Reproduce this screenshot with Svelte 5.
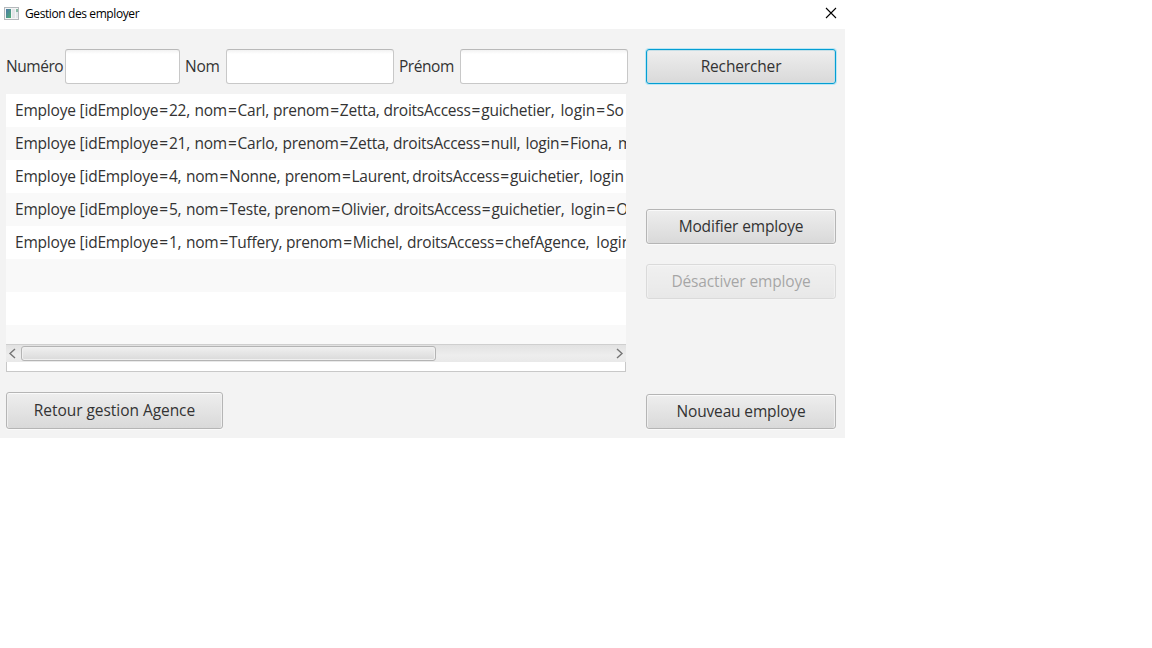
<script>
  const rows = [
    [['Employe [idEmploye=22, ', 179.5], ['nom=Carl, ', 78.5], ['prenom=Zetta, ', 110.5], ['droitsAccess=guichetier, ', 177], ['login=So', 66]],
    [['Employe [idEmploye=21, ', 179.5], ['nom=Carlo, ', 88], ['prenom=Zetta, ', 110.5], ['droitsAccess=null, ', 132.5], ['login=Fiona, ', 92.5], ['m', 8]],
    [['Employe [idEmploye=4, ', 171], ['nom=Nonne, ', 98.7], ['prenom=Laurent, ', 127.5], ['droitsAccess=guichetier, ', 177], ['login', 37]],
    [['Employe [idEmploye=5, ', 171], ['nom=Teste, ', 88.2], ['prenom=Olivier, ', 119.5], ['droitsAccess=guichetier, ', 177], ['login=O', 55]],
    [['Employe [idEmploye=1, ', 171], ['nom=Tuffery, ', 100], ['prenom=Michel, ', 121], ['droitsAccess=chefAgence, ', 189.3], ['login', 30]],
    [],
    [],
    []
  ];
</script>

<div class="window">
  <header>
    <svg class="app" width="15" height="13" viewBox="0 0 15 13">
      <defs>
        <linearGradient id="pane" x1="0" y1="0" x2="1" y2="1">
          <stop offset="0" stop-color="#4b78a8" />
          <stop offset="1" stop-color="#4fae74" />
        </linearGradient>
      </defs>
      <rect x=".5" y=".5" width="14" height="12" fill="#f5f5f5" stroke="#b4b8bb" />
      <rect x="2" y="2" width="5" height="9" fill="url(#pane)" />
      <rect x="8" y="2" width="3" height="9" fill="#e2e5e8" />
      <rect x="12" y="2" width="2" height="3" fill="#86b9a4" />
      <rect x="12" y="5" width="2" height="6" fill="#e3e9ec" />
    </svg>
    <span class="title">Gestion des employer</span>
    <svg class="close" width="12" height="12" viewBox="0 0 12 12">
      <path d="M1 1L11 11M11 1L1 11" stroke="#000" stroke-width="1.1" fill="none" />
    </svg>
  </header>
  <main>
    <section class="left">
      <div class="search">
        <label class="numero"><span>Numéro</span><input /></label>
        <label class="nom"><span>Nom</span><input /></label>
        <label class="prenom"><span>Prénom</span><input /></label>
      </div>
      <div class="list">
        <div class="rows">
          {#each rows as row}
            <div class="row">
              {#each row as [text, width]}
                {@const parts = text.split('=')}
                <span class="field" style="width: {width}px">{parts[0]}{#if parts.length > 1}<span class="eq">=</span>{parts[1]}{/if}</span>
              {/each}
            </div>
          {/each}
        </div>
        <div class="scroll">
          <svg width="15" height="17" viewBox="0 0 15 17"><path d="M9 4L4 8.500L9 13" /></svg>
          <div class="track"><div class="thumb"></div></div>
          <svg width="15" height="17" viewBox="0 0 15 17"><path d="M6 4L11 8.500L6 13" /></svg>
        </div>
        <div class="rest"></div>
      </div>
      <button class="back">Retour gestion Agence</button>
    </section>
    <section class="right">
      <button class="focused">Rechercher</button>
      <button class="edit">Modifier employe</button>
      <button class="disable" disabled>Désactiver employe</button>
      <button class="add">Nouveau employe</button>
    </section>
  </main>
</div>

<style>
  :global(body) { background: #fff; }
  .window {
    width: 845px;
    height: 438px;
    font: 15.5px/20px "Open Sans", "Noto Sans", sans-serif;
    letter-spacing: -0.2px;
    color: #333;
    background: #f3f3f3;
    overflow: hidden;
    white-space: nowrap;
  }
  header {
    display: flex;
    align-items: center;
    height: 29px;
    box-sizing: border-box;
    padding: 0 8px 3px 4px;
    background: #fff;
  }
  .title { margin-left: 6px; font-size: 12px; letter-spacing: -0.4px; color: #000; padding-top: 2px; }
  .close { margin-left: auto; }
  main { display: flex; gap: 18px; padding: 20px 9px 9px 6px; height: 380px; }
  .left { width: 622px; display: flex; flex-direction: column; }
  .right { width: 190px; display: flex; flex-direction: column; }
  .search { display: flex; gap: 5px; height: 35px; }
  label { display: flex; align-items: center; }
  label span { flex: none; padding-bottom: 2px; letter-spacing: -0.45px; }
  .numero { width: 174px; }
  .numero span { width: 59px; }
  .nom { width: 209px; }
  .nom span { width: 41px; letter-spacing: -0.2px; }
  .prenom { width: 229px; }
  .prenom span { width: 61px; }
  input {
    flex: 1;
    min-width: 0;
    height: 35px;
    box-sizing: border-box;
    border: 1px solid #c8c8c8;
    border-top-color: #b9b9b9;
    border-radius: 3px;
    background: linear-gradient(#f2f2f2, #fff 4px);
    outline: none;
  }
  .list { width: 620px; margin-top: 10px; height: 278px; overflow: hidden; }
  .rows { height: 250px; overflow: hidden; }
  .row {
    display: flex;
    height: 33px;
    box-sizing: border-box;
    padding: 0 0 0 9px;
    line-height: 33px;
    letter-spacing: -0.25px;
    background: #fff;
    overflow: hidden;
  }
  .row:nth-child(even) { background: #f9f9f9; }
  .field { flex: none; height: 33px; }
  .field:first-child { letter-spacing: -0.2px; }
  .field:last-child { flex: 0 1 auto; overflow: hidden; letter-spacing: -0.05px; }
  .eq { padding: 0 1px; }
  .scroll {
    display: flex;
    height: 18px;
    box-sizing: border-box;
    border-top: 1px solid #cfcfcf;
    background: linear-gradient(#e2e2e2, #ededed 60%, #e9e9e9);
  }
  .scroll svg { flex: none; }
  .scroll path { fill: none; stroke: #757575; stroke-width: 1.4; }
  .track { flex: 1; padding-top: 1px; }
  .thumb {
    width: 415px;
    height: 15px;
    box-sizing: border-box;
    border: 1px solid #b4b4b4;
    border-radius: 3px;
    background: linear-gradient(#f0f0f0, #dadada);
    box-shadow: inset 0 0 0 1px #f0f0f0;
  }
  .rest { height: 10px; box-sizing: border-box; border: 1px solid #c8c8c8; border-top: 0; background: #fff; }
  button {
    display: block;
    width: 190px;
    height: 35px;
    box-sizing: border-box;
    padding: 0 0 2px;
    font: inherit;
    letter-spacing: -0.15px;
    color: #333;
    border: 1px solid #b5b5b5;
    border-radius: 3px;
    background: linear-gradient(#eee, #d9d9d9);
    box-shadow: inset 0 1px 0 #fafafa, inset 1px 0 0 #efefef, inset -1px 0 0 #efefef, 0 1px 0 #fafafa;
  }
  .back { width: 217px; height: 37px; margin-top: 20px; letter-spacing: -0.05px; }
  .focused { border-color: #039ed3; box-shadow: 0 0 0 1px #bce6f4, inset 0 0 0 1px #c5dfe7; }
  .edit { margin-top: 125px; }
  .disable { margin-top: 20px; opacity: 0.4; }
  .add { margin-top: 95px; }
</style>
